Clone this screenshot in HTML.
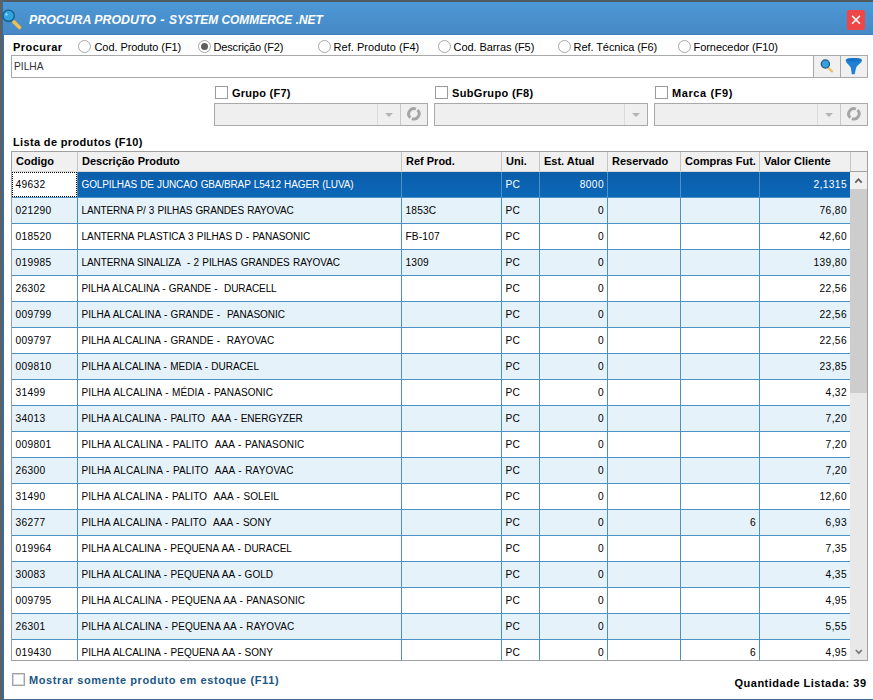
<!DOCTYPE html>
<html><head><meta charset="utf-8">
<style>
*{box-sizing:border-box;margin:0;padding:0}
html,body{width:873px;height:700px;overflow:hidden;background:#fff}
body{position:relative;font-family:"Liberation Sans",sans-serif;font-size:11px;color:#000}
.a{position:absolute}
.t{position:absolute;white-space:pre;line-height:13px}
.b{font-weight:bold}
.radio{position:absolute;width:13px;height:13px;border-radius:50%;border:1px solid #a8a8a8;background:#fff}
.radio.on::after{content:"";position:absolute;left:2px;top:2px;width:7px;height:7px;border-radius:50%;background:#5e5e5e}
.chk{position:absolute;width:13px;height:13px;border:1px solid #9a9a9a;background:#fff}
.combo{position:absolute;height:23px;border:1px solid #a9a9a9;background:#efefef}
.sep{position:absolute;top:0;bottom:0;width:1px;background:#dadada}
.sep2{position:absolute;top:0;bottom:0;width:1px;background:#c8c8c8}
.tri{position:absolute;width:0;height:0;border-left:4px solid transparent;border-right:4px solid transparent;border-top:4px solid #b4b4b4}
</style></head><body>
<!-- desktop strip & window border -->
<div class="a" style="left:0;top:0;width:873px;height:2px;background:#4f5a63"></div>
<div class="a" style="left:0;top:0;width:2px;height:700px;background:#5c6166"></div>
<div class="a" style="left:2px;top:1px;width:2px;height:699px;background:#3c6b98"></div>
<div class="a" style="left:2px;top:699px;width:871px;height:1px;background:#3c6b98"></div>
<!-- title bar -->
<div class="a" style="left:3px;top:2px;width:870px;height:33px;background:linear-gradient(#4c99d6,#4689c6);border-bottom:1px solid #4280bb"></div>
<svg class="a" style="left:0px;top:6px" width="24" height="26" viewBox="0 0 24 26">
  <line x1="14" y1="16" x2="19.5" y2="21.5" stroke="#f2bd52" stroke-width="3.6" stroke-linecap="round"/>
  <circle cx="8.6" cy="9.8" r="5.7" fill="#2ea6e2" stroke="#1b5c88" stroke-width="1.4"/>
  <circle cx="6.4" cy="8.4" r="1.3" fill="#86d4f8"/>
</svg>
<div class="t b" style="left:29px;top:13px;font-size:13px;font-style:italic;color:#fff;transform:scaleX(0.949);transform-origin:0 0">PROCURA PRODUTO</div>
<div class="t b" style="left:160.3px;top:13px;font-size:13px;font-style:italic;color:#fff">-</div>
<div class="t b" style="left:168.5px;top:13px;font-size:13px;font-style:italic;color:#fff;transform:scaleX(0.918);transform-origin:0 0">SYSTEM COMMERCE .NET</div>
<div class="a" style="left:847px;top:10px;width:18px;height:20px;background:#ef4747;border-radius:2px"></div>
<svg class="a" style="left:847px;top:10px" width="18" height="20" viewBox="0 0 18 20">
  <path d="M5.1 5.9 L12.9 13.8 M12.9 5.9 L5.1 13.8" stroke="#fff" stroke-width="1.5"/>
</svg>

<!-- Procurar row -->
<div class="t b" style="left:13px;top:41px;letter-spacing:0.45px">Procurar</div>
<div class="radio" style="left:78px;top:40px"></div>
<div class="t" style="left:94.5px;top:41px;letter-spacing:-0.08px">Cod. Produto (F1)</div>
<div class="radio on" style="left:198px;top:40px"></div>
<div class="t" style="left:213.6px;top:41px;letter-spacing:-0.18px">Descrição (F2)</div>
<div class="radio" style="left:318px;top:40px"></div>
<div class="t" style="left:333.5px;top:41px;letter-spacing:0.05px">Ref. Produto (F4)</div>
<div class="radio" style="left:438px;top:40px"></div>
<div class="t" style="left:453.6px;top:41px;letter-spacing:-0.08px">Cod. Barras (F5)</div>
<div class="radio" style="left:558px;top:40px"></div>
<div class="t" style="left:573.6px;top:41px;letter-spacing:-0.08px">Ref. Técnica (F6)</div>
<div class="radio" style="left:678px;top:40px"></div>
<div class="t" style="left:693.6px;top:41px;letter-spacing:-0.08px">Fornecedor (F10)</div>

<!-- search box -->
<div class="a" style="left:11px;top:55px;width:857px;height:23px;border:1px solid #a9a9a9;background:#fff"></div>
<div class="t" style="left:14px;top:60px;font-size:10.2px;color:#333">PILHA</div>
<div class="a" style="left:813px;top:55px;width:28px;height:23px;border:1px solid #a9a9a9;background:#f0f0f0"></div>
<div class="a" style="left:840px;top:55px;width:28px;height:23px;border:1px solid #a9a9a9;background:#f0f0f0"></div>
<svg class="a" style="left:813px;top:55px" width="28" height="23" viewBox="0 0 28 23">
  <line x1="15" y1="12.5" x2="19" y2="16.3" stroke="#eec060" stroke-width="2.4" stroke-linecap="round"/>
  <circle cx="12.4" cy="9" r="4.1" fill="#3aa0dc" stroke="#1d5a86" stroke-width="1.3"/>
</svg>
<svg class="a" style="left:840px;top:55px" width="28" height="23" viewBox="0 0 28 23">
  <path d="M5.7 5.2 C5.7 2.3 22 2.3 22 5.2 C22 7.8 17.2 10 16.2 12.5 L14.6 19.2 L11.8 19.2 L10.8 12.5 C9.6 10 5.7 7.8 5.7 5.2 Z" fill="#1f80d6"/><ellipse cx="13.85" cy="4.8" rx="7.6" ry="1.9" fill="#1a72c4"/>
</svg>

<!-- filters -->
<div class="chk" style="left:215px;top:86px"></div>
<div class="t b" style="left:232px;top:87px;letter-spacing:0.25px">Grupo (F7)</div>
<div class="chk" style="left:435px;top:86px"></div>
<div class="t b" style="left:452px;top:87px;letter-spacing:0.35px">SubGrupo (F8)</div>
<div class="chk" style="left:655px;top:86px"></div>
<div class="t b" style="left:672px;top:87px;letter-spacing:0.6px">Marca (F9)</div>

<div class="combo" style="left:214px;top:103px;width:214px">
  <div class="sep" style="left:162px"></div><div class="sep2" style="left:185px"></div>
  <div class="tri" style="left:170px;top:9px"></div>
  <svg class="a" style="left:186px;top:0" width="26" height="21" viewBox="0 0 26 21"><path d="M16.45 6.00 A5.2 5.2 0 0 1 10.87 14.59 M9.35 13.60 A5.2 5.2 0 0 1 14.93 5.01" fill="none" stroke="#a4a4a4" stroke-width="2.9"/></svg>
</div>
<div class="combo" style="left:434px;top:103px;width:214px">
  <div class="sep" style="left:189px"></div>
  <div class="tri" style="left:197px;top:9px"></div>
</div>
<div class="combo" style="left:654px;top:103px;width:214px">
  <div class="sep" style="left:162px"></div><div class="sep2" style="left:185px"></div>
  <div class="tri" style="left:170px;top:9px"></div>
  <svg class="a" style="left:186px;top:0" width="26" height="21" viewBox="0 0 26 21"><path d="M16.45 6.00 A5.2 5.2 0 0 1 10.87 14.59 M9.35 13.60 A5.2 5.2 0 0 1 14.93 5.01" fill="none" stroke="#a4a4a4" stroke-width="2.9"/></svg>
</div>

<div class="t b" style="left:13px;top:136px;letter-spacing:0.35px">Lista de produtos (F10)</div>

<!-- GRID -->
<div id="grid" class="a" style="left:11px;top:151px;width:857px;height:510px;border:1px solid #a0a0a0;background:#fff;overflow:hidden">
<div class="a" style="left:0;top:0;width:855px;height:19px;background:#f0f0f0"></div>
<div class="a" style="left:0;top:19px;width:855px;height:1px;background:#d8d8d8"></div>
<div class="t b" style="left:4px;top:3px;letter-spacing:0px">Codigo</div>
<div class="t b" style="left:70px;top:3px;letter-spacing:0px">Descrição Produto</div>
<div class="t b" style="left:394px;top:3px;letter-spacing:0px">Ref Prod.</div>
<div class="t b" style="left:494px;top:3px;letter-spacing:0px">Uni.</div>
<div class="t b" style="left:532px;top:3px;letter-spacing:0px">Est. Atual</div>
<div class="t b" style="left:600px;top:3px;letter-spacing:0px">Reservado</div>
<div class="t b" style="left:673px;top:3px;letter-spacing:0px">Compras Fut.</div>
<div class="t b" style="left:752px;top:3px;letter-spacing:0px">Valor Cliente</div>
<div class="a" style="left:65px;top:0;width:1px;height:19px;background:#c4c4c4"></div>
<div class="a" style="left:389px;top:0;width:1px;height:19px;background:#c4c4c4"></div>
<div class="a" style="left:489px;top:0;width:1px;height:19px;background:#c4c4c4"></div>
<div class="a" style="left:527px;top:0;width:1px;height:19px;background:#c4c4c4"></div>
<div class="a" style="left:595px;top:0;width:1px;height:19px;background:#c4c4c4"></div>
<div class="a" style="left:668px;top:0;width:1px;height:19px;background:#c4c4c4"></div>
<div class="a" style="left:747px;top:0;width:1px;height:19px;background:#c4c4c4"></div>
<div class="a" style="left:838px;top:0;width:1px;height:19px;background:#c4c4c4"></div>
<div class="a" style="left:0;top:20px;width:838px;height:25px;background:linear-gradient(#0a5eaa,#0c67b8)"></div>
<div class="a" style="left:0;top:45px;width:838px;height:1px;background:#4a93c2"></div>
<div class="t" style="left:3.5px;top:26px;font-size:10.2px;letter-spacing:0.35px;word-spacing:0px;color:#000">49632</div>
<div class="t" style="left:69.5px;top:26px;font-size:10px;letter-spacing:-0.135px;word-spacing:0.6px;color:#fff">GOLPILHAS DE JUNCAO GBA/BRAP L5412 HAGER (LUVA)</div>
<div class="t" style="left:493.5px;top:26px;font-size:10.2px;letter-spacing:0.15px;word-spacing:0px;color:#fff">PC</div>
<div class="t" style="right:263px;top:26px;font-size:10.2px;letter-spacing:0.4px;color:#fff">8000</div>
<div class="t" style="right:20px;top:26px;font-size:10.2px;letter-spacing:0.4px;color:#fff">2,1315</div>
<div class="a" style="left:0;top:20px;width:65px;height:25px;background:#fff;border:1px dotted #000"></div>
<div class="t" style="left:3.5px;top:26px;font-size:10.2px;letter-spacing:0.35px;color:#000">49632</div>
<div class="a" style="left:0;top:46px;width:838px;height:25px;background:#e5f2fa"></div>
<div class="a" style="left:0;top:71px;width:838px;height:1px;background:#4a93c2"></div>
<div class="t" style="left:3.5px;top:52px;font-size:10.2px;letter-spacing:0.35px;word-spacing:0px;color:#000">021290</div>
<div class="t" style="left:69.5px;top:52px;font-size:10px;letter-spacing:-0.14px;word-spacing:0.6px;color:#000">LANTERNA P/ 3 PILHAS GRANDES RAYOVAC</div>
<div class="t" style="left:393.5px;top:52px;font-size:10.2px;letter-spacing:0.15px;word-spacing:0px;color:#000">1853C</div>
<div class="t" style="left:493.5px;top:52px;font-size:10.2px;letter-spacing:0.15px;word-spacing:0px;color:#000">PC</div>
<div class="t" style="right:263px;top:52px;font-size:10.2px;letter-spacing:0.4px;color:#000">0</div>
<div class="t" style="right:20px;top:52px;font-size:10.2px;letter-spacing:0.4px;color:#000">76,80</div>
<div class="a" style="left:0;top:72px;width:838px;height:25px;background:#fff"></div>
<div class="a" style="left:0;top:97px;width:838px;height:1px;background:#4a93c2"></div>
<div class="t" style="left:3.5px;top:78px;font-size:10.2px;letter-spacing:0.35px;word-spacing:0px;color:#000">018520</div>
<div class="t" style="left:69.5px;top:78px;font-size:10px;letter-spacing:-0.051px;word-spacing:0.6px;color:#000">LANTERNA PLASTICA 3 PILHAS D - PANASONIC</div>
<div class="t" style="left:393.5px;top:78px;font-size:10.2px;letter-spacing:0.15px;word-spacing:0px;color:#000">FB-107</div>
<div class="t" style="left:493.5px;top:78px;font-size:10.2px;letter-spacing:0.15px;word-spacing:0px;color:#000">PC</div>
<div class="t" style="right:263px;top:78px;font-size:10.2px;letter-spacing:0.4px;color:#000">0</div>
<div class="t" style="right:20px;top:78px;font-size:10.2px;letter-spacing:0.4px;color:#000">42,60</div>
<div class="a" style="left:0;top:98px;width:838px;height:25px;background:#e5f2fa"></div>
<div class="a" style="left:0;top:123px;width:838px;height:1px;background:#4a93c2"></div>
<div class="t" style="left:3.5px;top:104px;font-size:10.2px;letter-spacing:0.35px;word-spacing:0px;color:#000">019985</div>
<div class="t" style="left:69.5px;top:104px;font-size:10px;letter-spacing:-0.073px;word-spacing:0.6px;color:#000">LANTERNA SINALIZA  - 2 PILHAS GRANDES RAYOVAC</div>
<div class="t" style="left:393.5px;top:104px;font-size:10.2px;letter-spacing:0.15px;word-spacing:0px;color:#000">1309</div>
<div class="t" style="left:493.5px;top:104px;font-size:10.2px;letter-spacing:0.15px;word-spacing:0px;color:#000">PC</div>
<div class="t" style="right:263px;top:104px;font-size:10.2px;letter-spacing:0.4px;color:#000">0</div>
<div class="t" style="right:20px;top:104px;font-size:10.2px;letter-spacing:0.4px;color:#000">139,80</div>
<div class="a" style="left:0;top:124px;width:838px;height:25px;background:#fff"></div>
<div class="a" style="left:0;top:149px;width:838px;height:1px;background:#4a93c2"></div>
<div class="t" style="left:3.5px;top:130px;font-size:10.2px;letter-spacing:0.35px;word-spacing:0px;color:#000">26302</div>
<div class="t" style="left:69.5px;top:130px;font-size:10px;letter-spacing:-0.103px;word-spacing:0.6px;color:#000">PILHA ALCALINA - GRANDE -  DURACELL</div>
<div class="t" style="left:493.5px;top:130px;font-size:10.2px;letter-spacing:0.15px;word-spacing:0px;color:#000">PC</div>
<div class="t" style="right:263px;top:130px;font-size:10.2px;letter-spacing:0.4px;color:#000">0</div>
<div class="t" style="right:20px;top:130px;font-size:10.2px;letter-spacing:0.4px;color:#000">22,56</div>
<div class="a" style="left:0;top:150px;width:838px;height:25px;background:#e5f2fa"></div>
<div class="a" style="left:0;top:175px;width:838px;height:1px;background:#4a93c2"></div>
<div class="t" style="left:3.5px;top:156px;font-size:10.2px;letter-spacing:0.35px;word-spacing:0px;color:#000">009799</div>
<div class="t" style="left:69.5px;top:156px;font-size:10px;letter-spacing:0.003px;word-spacing:0.6px;color:#000">PILHA ALCALINA - GRANDE -  PANASONIC</div>
<div class="t" style="left:493.5px;top:156px;font-size:10.2px;letter-spacing:0.15px;word-spacing:0px;color:#000">PC</div>
<div class="t" style="right:263px;top:156px;font-size:10.2px;letter-spacing:0.4px;color:#000">0</div>
<div class="t" style="right:20px;top:156px;font-size:10.2px;letter-spacing:0.4px;color:#000">22,56</div>
<div class="a" style="left:0;top:176px;width:838px;height:25px;background:#fff"></div>
<div class="a" style="left:0;top:201px;width:838px;height:1px;background:#4a93c2"></div>
<div class="t" style="left:3.5px;top:182px;font-size:10.2px;letter-spacing:0.35px;word-spacing:0px;color:#000">009797</div>
<div class="t" style="left:69.5px;top:182px;font-size:10px;letter-spacing:0.0px;word-spacing:0.6px;color:#000">PILHA ALCALINA - GRANDE -  RAYOVAC</div>
<div class="t" style="left:493.5px;top:182px;font-size:10.2px;letter-spacing:0.15px;word-spacing:0px;color:#000">PC</div>
<div class="t" style="right:263px;top:182px;font-size:10.2px;letter-spacing:0.4px;color:#000">0</div>
<div class="t" style="right:20px;top:182px;font-size:10.2px;letter-spacing:0.4px;color:#000">22,56</div>
<div class="a" style="left:0;top:202px;width:838px;height:25px;background:#e5f2fa"></div>
<div class="a" style="left:0;top:227px;width:838px;height:1px;background:#4a93c2"></div>
<div class="t" style="left:3.5px;top:208px;font-size:10.2px;letter-spacing:0.35px;word-spacing:0px;color:#000">009810</div>
<div class="t" style="left:69.5px;top:208px;font-size:10px;letter-spacing:-0.019px;word-spacing:0.6px;color:#000">PILHA ALCALINA - MEDIA - DURACEL</div>
<div class="t" style="left:493.5px;top:208px;font-size:10.2px;letter-spacing:0.15px;word-spacing:0px;color:#000">PC</div>
<div class="t" style="right:263px;top:208px;font-size:10.2px;letter-spacing:0.4px;color:#000">0</div>
<div class="t" style="right:20px;top:208px;font-size:10.2px;letter-spacing:0.4px;color:#000">23,85</div>
<div class="a" style="left:0;top:228px;width:838px;height:25px;background:#fff"></div>
<div class="a" style="left:0;top:253px;width:838px;height:1px;background:#4a93c2"></div>
<div class="t" style="left:3.5px;top:234px;font-size:10.2px;letter-spacing:0.35px;word-spacing:0px;color:#000">31499</div>
<div class="t" style="left:69.5px;top:234px;font-size:10px;letter-spacing:0.091px;word-spacing:0.6px;color:#000">PILHA ALCALINA - MÉDIA - PANASONIC</div>
<div class="t" style="left:493.5px;top:234px;font-size:10.2px;letter-spacing:0.15px;word-spacing:0px;color:#000">PC</div>
<div class="t" style="right:263px;top:234px;font-size:10.2px;letter-spacing:0.4px;color:#000">0</div>
<div class="t" style="right:20px;top:234px;font-size:10.2px;letter-spacing:0.4px;color:#000">4,32</div>
<div class="a" style="left:0;top:254px;width:838px;height:25px;background:#e5f2fa"></div>
<div class="a" style="left:0;top:279px;width:838px;height:1px;background:#4a93c2"></div>
<div class="t" style="left:3.5px;top:260px;font-size:10.2px;letter-spacing:0.35px;word-spacing:0px;color:#000">34013</div>
<div class="t" style="left:69.5px;top:260px;font-size:10px;letter-spacing:-0.01px;word-spacing:0.6px;color:#000">PILHA ALCALINA - PALITO  AAA - ENERGYZER</div>
<div class="t" style="left:493.5px;top:260px;font-size:10.2px;letter-spacing:0.15px;word-spacing:0px;color:#000">PC</div>
<div class="t" style="right:263px;top:260px;font-size:10.2px;letter-spacing:0.4px;color:#000">0</div>
<div class="t" style="right:20px;top:260px;font-size:10.2px;letter-spacing:0.4px;color:#000">7,20</div>
<div class="a" style="left:0;top:280px;width:838px;height:25px;background:#fff"></div>
<div class="a" style="left:0;top:305px;width:838px;height:1px;background:#4a93c2"></div>
<div class="t" style="left:3.5px;top:286px;font-size:10.2px;letter-spacing:0.35px;word-spacing:0px;color:#000">009801</div>
<div class="t" style="left:69.5px;top:286px;font-size:10px;letter-spacing:0.133px;word-spacing:0.6px;color:#000">PILHA ALCALINA - PALITO  AAA - PANASONIC</div>
<div class="t" style="left:493.5px;top:286px;font-size:10.2px;letter-spacing:0.15px;word-spacing:0px;color:#000">PC</div>
<div class="t" style="right:263px;top:286px;font-size:10.2px;letter-spacing:0.4px;color:#000">0</div>
<div class="t" style="right:20px;top:286px;font-size:10.2px;letter-spacing:0.4px;color:#000">7,20</div>
<div class="a" style="left:0;top:306px;width:838px;height:25px;background:#e5f2fa"></div>
<div class="a" style="left:0;top:331px;width:838px;height:1px;background:#4a93c2"></div>
<div class="t" style="left:3.5px;top:312px;font-size:10.2px;letter-spacing:0.35px;word-spacing:0px;color:#000">26300</div>
<div class="t" style="left:69.5px;top:312px;font-size:10px;letter-spacing:0.138px;word-spacing:0.6px;color:#000">PILHA ALCALINA - PALITO  AAA - RAYOVAC</div>
<div class="t" style="left:493.5px;top:312px;font-size:10.2px;letter-spacing:0.15px;word-spacing:0px;color:#000">PC</div>
<div class="t" style="right:263px;top:312px;font-size:10.2px;letter-spacing:0.4px;color:#000">0</div>
<div class="t" style="right:20px;top:312px;font-size:10.2px;letter-spacing:0.4px;color:#000">7,20</div>
<div class="a" style="left:0;top:332px;width:838px;height:25px;background:#fff"></div>
<div class="a" style="left:0;top:357px;width:838px;height:1px;background:#4a93c2"></div>
<div class="t" style="left:3.5px;top:338px;font-size:10.2px;letter-spacing:0.35px;word-spacing:0px;color:#000">31490</div>
<div class="t" style="left:69.5px;top:338px;font-size:10px;letter-spacing:0.081px;word-spacing:0.6px;color:#000">PILHA ALCALINA - PALITO  AAA - SOLEIL</div>
<div class="t" style="left:493.5px;top:338px;font-size:10.2px;letter-spacing:0.15px;word-spacing:0px;color:#000">PC</div>
<div class="t" style="right:263px;top:338px;font-size:10.2px;letter-spacing:0.4px;color:#000">0</div>
<div class="t" style="right:20px;top:338px;font-size:10.2px;letter-spacing:0.4px;color:#000">12,60</div>
<div class="a" style="left:0;top:358px;width:838px;height:25px;background:#e5f2fa"></div>
<div class="a" style="left:0;top:383px;width:838px;height:1px;background:#4a93c2"></div>
<div class="t" style="left:3.5px;top:364px;font-size:10.2px;letter-spacing:0.35px;word-spacing:0px;color:#000">36277</div>
<div class="t" style="left:69.5px;top:364px;font-size:10px;letter-spacing:0.062px;word-spacing:0.6px;color:#000">PILHA ALCALINA - PALITO  AAA - SONY</div>
<div class="t" style="left:493.5px;top:364px;font-size:10.2px;letter-spacing:0.15px;word-spacing:0px;color:#000">PC</div>
<div class="t" style="right:263px;top:364px;font-size:10.2px;letter-spacing:0.4px;color:#000">0</div>
<div class="t" style="right:111px;top:364px;font-size:10.2px;letter-spacing:0.4px;color:#000">6</div>
<div class="t" style="right:20px;top:364px;font-size:10.2px;letter-spacing:0.4px;color:#000">6,93</div>
<div class="a" style="left:0;top:384px;width:838px;height:25px;background:#fff"></div>
<div class="a" style="left:0;top:409px;width:838px;height:1px;background:#4a93c2"></div>
<div class="t" style="left:3.5px;top:390px;font-size:10.2px;letter-spacing:0.35px;word-spacing:0px;color:#000">019964</div>
<div class="t" style="left:69.5px;top:390px;font-size:10px;letter-spacing:-0.014px;word-spacing:0.6px;color:#000">PILHA ALCALINA - PEQUENA AA - DURACEL</div>
<div class="t" style="left:493.5px;top:390px;font-size:10.2px;letter-spacing:0.15px;word-spacing:0px;color:#000">PC</div>
<div class="t" style="right:263px;top:390px;font-size:10.2px;letter-spacing:0.4px;color:#000">0</div>
<div class="t" style="right:20px;top:390px;font-size:10.2px;letter-spacing:0.4px;color:#000">7,35</div>
<div class="a" style="left:0;top:410px;width:838px;height:25px;background:#e5f2fa"></div>
<div class="a" style="left:0;top:435px;width:838px;height:1px;background:#4a93c2"></div>
<div class="t" style="left:3.5px;top:416px;font-size:10.2px;letter-spacing:0.35px;word-spacing:0px;color:#000">30083</div>
<div class="t" style="left:69.5px;top:416px;font-size:10px;letter-spacing:0.0px;word-spacing:0.6px;color:#000">PILHA ALCALINA - PEQUENA AA - GOLD</div>
<div class="t" style="left:493.5px;top:416px;font-size:10.2px;letter-spacing:0.15px;word-spacing:0px;color:#000">PC</div>
<div class="t" style="right:263px;top:416px;font-size:10.2px;letter-spacing:0.4px;color:#000">0</div>
<div class="t" style="right:20px;top:416px;font-size:10.2px;letter-spacing:0.4px;color:#000">4,35</div>
<div class="a" style="left:0;top:436px;width:838px;height:25px;background:#fff"></div>
<div class="a" style="left:0;top:461px;width:838px;height:1px;background:#4a93c2"></div>
<div class="t" style="left:3.5px;top:442px;font-size:10.2px;letter-spacing:0.35px;word-spacing:0px;color:#000">009795</div>
<div class="t" style="left:69.5px;top:442px;font-size:10px;letter-spacing:0.058px;word-spacing:0.6px;color:#000">PILHA ALCALINA - PEQUENA AA - PANASONIC</div>
<div class="t" style="left:493.5px;top:442px;font-size:10.2px;letter-spacing:0.15px;word-spacing:0px;color:#000">PC</div>
<div class="t" style="right:263px;top:442px;font-size:10.2px;letter-spacing:0.4px;color:#000">0</div>
<div class="t" style="right:20px;top:442px;font-size:10.2px;letter-spacing:0.4px;color:#000">4,95</div>
<div class="a" style="left:0;top:462px;width:838px;height:25px;background:#e5f2fa"></div>
<div class="a" style="left:0;top:487px;width:838px;height:1px;background:#4a93c2"></div>
<div class="t" style="left:3.5px;top:468px;font-size:10.2px;letter-spacing:0.35px;word-spacing:0px;color:#000">26301</div>
<div class="t" style="left:69.5px;top:468px;font-size:10px;letter-spacing:0.058px;word-spacing:0.6px;color:#000">PILHA ALCALINA - PEQUENA AA - RAYOVAC</div>
<div class="t" style="left:493.5px;top:468px;font-size:10.2px;letter-spacing:0.15px;word-spacing:0px;color:#000">PC</div>
<div class="t" style="right:263px;top:468px;font-size:10.2px;letter-spacing:0.4px;color:#000">0</div>
<div class="t" style="right:20px;top:468px;font-size:10.2px;letter-spacing:0.4px;color:#000">5,55</div>
<div class="a" style="left:0;top:488px;width:838px;height:25px;background:#fff"></div>
<div class="a" style="left:0;top:513px;width:838px;height:1px;background:#4a93c2"></div>
<div class="t" style="left:3.5px;top:494px;font-size:10.2px;letter-spacing:0.35px;word-spacing:0px;color:#000">019430</div>
<div class="t" style="left:69.5px;top:494px;font-size:10px;letter-spacing:0.0px;word-spacing:0.6px;color:#000">PILHA ALCALINA - PEQUENA AA - SONY</div>
<div class="t" style="left:493.5px;top:494px;font-size:10.2px;letter-spacing:0.15px;word-spacing:0px;color:#000">PC</div>
<div class="t" style="right:263px;top:494px;font-size:10.2px;letter-spacing:0.4px;color:#000">0</div>
<div class="t" style="right:111px;top:494px;font-size:10.2px;letter-spacing:0.4px;color:#000">6</div>
<div class="t" style="right:20px;top:494px;font-size:10.2px;letter-spacing:0.4px;color:#000">4,95</div>
<div class="a" style="left:65px;top:20px;width:1px;height:510px;background:#4a93c2"></div>
<div class="a" style="left:389px;top:20px;width:1px;height:510px;background:#4a93c2"></div>
<div class="a" style="left:489px;top:20px;width:1px;height:510px;background:#4a93c2"></div>
<div class="a" style="left:527px;top:20px;width:1px;height:510px;background:#4a93c2"></div>
<div class="a" style="left:595px;top:20px;width:1px;height:510px;background:#4a93c2"></div>
<div class="a" style="left:668px;top:20px;width:1px;height:510px;background:#4a93c2"></div>
<div class="a" style="left:747px;top:20px;width:1px;height:510px;background:#4a93c2"></div>
<div class="a" style="left:838px;top:0;width:1px;height:19px;background:#c4c4c4"></div>
<div class="a" style="left:838px;top:19px;width:17px;height:1px;background:#a0a0a0"></div>
<div class="a" style="left:838px;top:20px;width:17px;height:488px;background:#e8e8e8"></div>
<div class="a" style="left:838px;top:37px;width:17px;height:204px;background:#cdcdcd"></div>
<div class="a" style="left:838px;top:20px;width:17px;height:17px;background:#f0f0f0"></div>
<svg class="a" style="left:838px;top:20px" width="17" height="17" viewBox="0 0 17 17"><path d="M5.3 10.6 L8.5 7.2 L11.7 10.6" fill="none" stroke="#5a5a5a" stroke-width="1.7"/></svg>
<svg class="a" style="left:838px;top:491px" width="17" height="17" viewBox="0 0 17 17"><path d="M5.8 7 L8.8 10.2 L11.8 7" fill="none" stroke="#7a7a7a" stroke-width="1.7"/></svg>
</div>

<!-- bottom -->
<div class="a" style="left:12px;top:673px;width:13px;height:13px;border:1px solid #a2a2a2;background:#fff"><div class="a" style="left:0px;top:0px;width:11px;height:11px;border:1px solid #d6d6de"></div></div>
<div class="t b" style="left:29px;top:674px;color:#1a5785;letter-spacing:0.6px">Mostrar somente produto em estoque (F11)</div>
<div class="t b" style="left:734.5px;top:677px;letter-spacing:0.5px">Quantidade Listada: 39</div>
</body></html>
